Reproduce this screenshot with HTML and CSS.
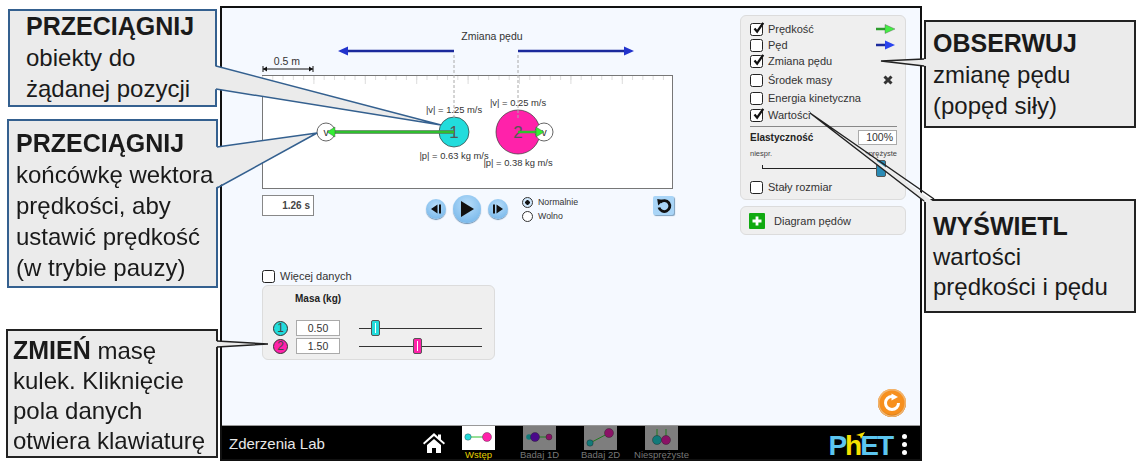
FILE: index.html
```html
<!DOCTYPE html>
<html lang="pl">
<head>
    <meta charset="UTF-8">
    <title>Zderzenia Lab</title>
    <link rel="stylesheet" href="styles.css">
</head>
<body>
<svg class="defs" width="0" height="0">
    <symbol id="tick" viewBox="0 0 16 16">
        <path d="M4 7.500l3 3.500 7-10" fill="none" stroke="#111" stroke-width="2.600"/>
    </symbol>
</svg>
<div class="stage">
    <div class="sim">
        <div class="sim-main">
            <div class="left-col">
                <svg class="scene" width="412" height="182" viewBox="262 8 412 182">
                    <text class="lbl" x="287" y="65" text-anchor="middle">0.5 m</text>
                    <path d="M263 69h50" stroke="#111" stroke-width="1"/>
                    <path d="M263 66v6M313 66v6" stroke="#111" stroke-width="1"/>
                    <path d="M263 69l4-2.500v5zM313 69l-4-2.500v5z" fill="#111"/>

                    <text class="lbl" x="492" y="40" text-anchor="middle">Zmiana pędu</text>
                    <path d="M346 51h108M518 51h108" stroke="#1b2a9c" stroke-width="2.500"/>
                    <path d="M338 51l10-4.500v9zM634 51l-10-4.500v9z" fill="#2233cc"/>

                    <rect x="262.500" y="75.500" width="410" height="113" fill="#fff" stroke="#777"/>
                    <path d="M262 78h411" stroke="#ddd" stroke-width="4" stroke-dasharray="1 9.280"/>
                    <path d="M262 80h411" stroke="#ddd" stroke-width="8" stroke-dasharray="1 50.400"/>

                    <circle cx="454" cy="132" r="15" fill="#22dcdc" stroke="#333" stroke-width=".7"/>
                    <circle cx="518" cy="132" r="22" fill="#ff22aa" stroke="#333" stroke-width=".7"/>
                    <circle cx="326" cy="132" r="9" fill="#fff" stroke="#666"/>
                    <circle cx="544" cy="132" r="9" fill="#fff" stroke="#666"/>
                    <text class="ball" x="454" y="138" text-anchor="middle">1</text>
                    <text class="ball" x="518" y="138" text-anchor="middle">2</text>
                    <text class="lbl" x="326" y="136" text-anchor="middle">v</text>
                    <text class="lbl" x="544" y="136" text-anchor="middle">v</text>
                    <path d="M334 132h120" stroke="#666" stroke-width="3.600"/>
                    <path d="M334 132h120M518 132h18" stroke="#2fbf2f" stroke-width="2.400"/>
                    <path d="M327 132l8-5v10zM544 132l-8-5v10z" fill="#33ee33" stroke="#444" stroke-width=".4"/>

                    <path d="M454 55v63M518 55v63" stroke="#aaa" stroke-dasharray="3 2"/>
                    <text class="val" x="454" y="113" text-anchor="middle">|v| = 1.25 m/s</text>
                    <text class="val" x="518" y="106" text-anchor="middle">|v| = 0.25 m/s</text>
                    <text class="val" x="454" y="159" text-anchor="middle">|p| = 0.63 kg m/s</text>
                    <text class="val" x="518" y="166" text-anchor="middle">|p| = 0.38 kg m/s</text>
                </svg>

                <div class="controls">
                    <div class="time-box">1.26 s</div>
                    <div class="transport">
                        <button class="round-btn">
                            <svg width="12" height="12" viewBox="0 0 12 12"><path d="M7.500 1.500v9L1 6zM9 1.500h2v9H9z" fill="#111"/></svg>
                        </button>
                        <button class="round-btn play">
                            <svg width="16" height="18" viewBox="0 0 16 18"><path d="M2 1l13 8-13 8z" fill="#111"/></svg>
                        </button>
                        <button class="round-btn">
                            <svg width="12" height="12" viewBox="0 0 12 12"><path d="M4.500 1.500v9L11 6zM1 1.500h2v9H1z" fill="#111"/></svg>
                        </button>
                    </div>
                    <div class="speed">
                        <div class="radio-row"><span class="radio on"></span>Normalnie</div>
                        <div class="radio-row"><span class="radio"></span>Wolno</div>
                    </div>
                    <button class="replay">
                        <svg width="16" height="16" viewBox="0 0 16 16">
                            <path d="M4.400 4.200a5.500 5.500 0 1 1-1.400 5.300" fill="none" stroke="#111" stroke-width="2.800"/>
                            <path d="M1.200 1l6.500 1-5.500 5.500z" fill="#111"/>
                        </svg>
                    </button>
                </div>

                <div class="more-data row">
                    <span class="check"></span>Więcej danych
                </div>
                <div class="mass-panel">
                    <div class="mass-title">Masa (kg)</div>
                    <div class="mass-row">
                        <span class="badge cyan">1</span>
                        <span class="num-box">0.50</span>
                        <span class="slider"><span class="thumb cyan" style="left: 16px"></span></span>
                    </div>
                    <div class="mass-row">
                        <span class="badge pink">2</span>
                        <span class="num-box">1.50</span>
                        <span class="slider"><span class="thumb pink" style="left: 58px"></span></span>
                    </div>
                </div>
            </div>

            <div class="right-col">
                <div class="panel">
                    <div class="row"><span class="check"><svg><use href="#tick"/></svg></span>Prędkość
                        <svg class="legend" width="19" height="10" viewBox="0 0 19 10"><path d="M0 5h10" stroke="#2c9c2c" stroke-width="2.500"/><path d="M19 5l-10-4.500v9z" fill="#44ee44" stroke="#555" stroke-width=".4"/></svg>
                    </div>
                    <div class="row"><span class="check"></span>Pęd
                        <svg class="legend" width="19" height="10" viewBox="0 0 19 10"><path d="M0 5h10" stroke="#1b2a9c" stroke-width="2.500"/><path d="M19 5l-10-4.500v9z" fill="#2a44ee"/></svg>
                    </div>
                    <div class="row"><span class="check"><svg><use href="#tick"/></svg></span>Zmiana pędu</div>
                    <div class="row r4"><span class="check"></span>Środek masy
                        <svg class="legend cross" width="10" height="10" viewBox="0 0 10 10"><path d="M1.500 1.500l7 7M8.500 1.500l-7 7" stroke="#333" stroke-width="3"/></svg>
                    </div>
                    <div class="row r5"><span class="check"></span>Energia kinetyczna</div>
                    <div class="row r6"><span class="check"><svg><use href="#tick"/></svg></span>Wartości</div>
                    <div class="divider"></div>
                    <div class="elastic-head">
                        <b>Elastyczność</b>
                        <span class="pct-box">100%</span>
                    </div>
                    <div class="elastic-ends"><span>niespr.</span><span>sprężyste</span></div>
                    <div class="elastic-slider"><span class="elastic-thumb"></span></div>
                    <div class="row r-last"><span class="check"></span>Stały rozmiar</div>
                </div>
                <div class="panel diagram">
                    <span class="plus">
                        <svg width="16" height="16" viewBox="0 0 16 16"><path d="M8 3.500v9M3.500 8h9" stroke="#fff" stroke-width="2.800"/></svg>
                    </span>
                    Diagram pędów
                </div>
                <button class="reset-all">
                    <svg width="20" height="20" viewBox="0 0 20 20">
                        <path d="M10 3.500a6.500 6.500 0 1 0 6.500 6.500" fill="none" stroke="#fff" stroke-width="3"/>
                        <path d="M9.500 .5l6.500 3.500-6.500 3.500z" fill="#fff"/>
                    </svg>
                </button>
            </div>
        </div>

        <div class="navbar">
            <div class="sim-title">Zderzenia Lab</div>
            <svg class="home" width="22" height="20" viewBox="0 0 22 20">
                <path d="M11 0L0 10l1.200 1.500L11 3l9.800 8.500L22 10l-4-3.600V1.500h-3v2.200z" fill="#fff"/>
                <path d="M4 12l7-6 7 6v8h-5v-5H9v5H4z" fill="#fff"/>
            </svg>
            <div class="tab active">
                <svg class="thumb-img" viewBox="0 0 33 24">
                    <path d="M6 11h18" stroke="#2fbf2f" stroke-width="1"/>
                    <circle cx="6" cy="11" r="3.200" fill="#22dcdc" stroke="#333" stroke-width=".4"/>
                    <circle cx="25" cy="11" r="4.500" fill="#ff22aa" stroke="#333" stroke-width=".4"/>
                </svg>
                <span>Wstęp</span>
            </div>
            <div class="tab">
                <svg class="thumb-img" viewBox="0 0 33 24">
                    <path d="M7 11h20" stroke="#1e7a1e" stroke-width="1"/>
                    <circle cx="6" cy="11" r="2.800" fill="#127a7a"/>
                    <circle cx="12" cy="11" r="4.500" fill="#4a0a8a" stroke="#222" stroke-width=".4"/>
                    <circle cx="26" cy="11" r="3" fill="#8a1266" stroke="#222" stroke-width=".4"/>
                </svg>
                <span>Badaj 1D</span>
            </div>
            <div class="tab">
                <svg class="thumb-img" viewBox="0 0 33 24">
                    <path d="M6 17l19-10" stroke="#1e7a1e" stroke-width="1"/>
                    <circle cx="6" cy="17" r="3.200" fill="#127a7a" stroke="#222" stroke-width=".4"/>
                    <circle cx="25" cy="7" r="4.500" fill="#8a1266" stroke="#222" stroke-width=".4"/>
                </svg>
                <span>Badaj 2D</span>
            </div>
            <div class="tab">
                <svg class="thumb-img" viewBox="0 0 33 24">
                    <path d="M12 12V3M21 12V3" stroke="#1e7a1e" stroke-width="1"/>
                    <circle cx="12" cy="14" r="4.500" fill="#127a7a" stroke="#222" stroke-width=".4"/>
                    <circle cx="21" cy="14" r="4.500" fill="#8a1266" stroke="#222" stroke-width=".4"/>
                </svg>
                <span>Niesprężyste</span>
            </div>
            <div class="phet">
                <svg class="phet-star" width="9" height="7" viewBox="0 0 9 7"><path d="M9 0L0 3l4 1 1 3z" fill="#f5e000"/></svg>
                <span class="blue">P</span><span class="yellow">h</span><span class="blue">ET</span>
            </div>
            <div class="dots"><i></i><i></i><i></i></div>
        </div>
    </div>

    <div class="callout blue-edge c1"><b>PRZECIĄGNIJ</b><br>obiekty do<br>żądanej pozycji</div>
    <div class="callout blue-edge c2"><b>PRZECIĄGNIJ</b><br>końcówkę wektora<br>prędkości, aby<br>ustawić prędkość<br>(w trybie pauzy)</div>
    <div class="callout c3"><b>ZMIEŃ</b> masę<br>kulek. Kliknięcie<br>pola danych<br>otwiera klawiaturę</div>
    <div class="callout c4"><b>OBSERWUJ</b><br>zmianę pędu<br>(popęd siły)</div>
    <div class="callout c5"><b>WYŚWIETL</b><br>wartości<br>prędkości i pędu</div>

    <svg class="tails" width="1140" height="464" viewBox="0 0 1140 464">
        <path class="tail-fill" d="M214 66L441 125 214 89z"/>
        <path class="tail-blue" d="M216 66L441 125 216 89"/>
        <path class="tail-fill" d="M215 147L317 133 215 188z"/>
        <path class="tail-blue" d="M217 147L317 133 217 188"/>
        <path class="tail-fill" d="M215 341L268 344 215 347z"/>
        <path class="tail-dark" d="M217 341L268 344 217 347"/>
        <path class="tail-fill" d="M926 59L881 61 926 66z"/>
        <path class="tail-dark" d="M924 59L881 61 924 66"/>
        <path class="tail-fill" d="M934 202L810 113 925 202z"/>
        <path class="tail-dark" d="M934 199L810 113 924 201"/>
    </svg>
</div>
</body>
</html>
```
FILE: styles.css
```css
* {
    box-sizing: border-box;
}
body {
    margin: 0;
    background: #fff;
    font-family: "Liberation Sans", Arial, sans-serif;
    color: #222;
}
button {
    padding: 0;
    border: none;
    font: inherit;
}
.defs {
    position: absolute;
}
.stage {
    position: relative;
    width: 1140px;
    height: 464px;
    padding: 6px 0 0 220px;
    overflow: hidden;
    filter: blur(.35px);
}

/* sim window */
.sim {
    display: flex;
    flex-direction: column;
    width: 702px;
    height: 455px;
    border: 2px solid #111;
    background: #f5f9ff;
}
.sim-main {
    display: flex;
    flex: 1;
    min-height: 0;
}
.left-col {
    width: 412px;
    margin-left: 40px;
}
.scene {
    display: block;
    overflow: visible;
}
.lbl {
    font-size: 10.500px;
    fill: #333;
}
.val {
    font-size: 9.400px;
    fill: #333;
}
.ball {
    font-size: 17px;
    fill: #555;
}

.controls {
    display: flex;
    align-items: flex-start;
    margin-top: 5px;
    height: 32px;
}
.time-box {
    width: 52px;
    height: 21px;
    padding-right: 3px;
    border: 1px solid #888;
    background: #fff;
    font-size: 10px;
    font-weight: bold;
    line-height: 19px;
    text-align: right;
    color: #444;
}
.transport {
    display: flex;
    align-items: center;
    gap: 7px;
    height: 28px;
    margin-left: 112px;
}
.round-btn {
    display: flex;
    align-items: center;
    justify-content: center;
    width: 20px;
    height: 20px;
    border-radius: 50%;
    background: radial-gradient(circle at 50% 35%, #b9defa, #7fbcec 75%, #5a9ad0);
    box-shadow: 0 1px 1px #6a8fb0;
}
.round-btn.play {
    width: 28px;
    height: 28px;
}
.speed {
    margin: 0 0 0 14px;
    font-size: 8.800px;
    color: #333;
}
.radio-row {
    display: flex;
    align-items: center;
    gap: 5px;
    height: 14px;
}
.radio {
    width: 11px;
    height: 11px;
    border: 1px solid #333;
    border-radius: 50%;
    background: #fff;
}
.radio.on {
    background: radial-gradient(circle, #111 2px, #cfe6fa 2.500px);
}
.replay {
    display: flex;
    align-items: center;
    justify-content: center;
    width: 21px;
    height: 19px;
    margin: 1px 0 0 auto;
    border-radius: 2px;
    background: #a9d5f7;
    box-shadow: 1px 1px 1px #7d9fbd;
}

.row {
    display: flex;
    align-items: center;
    gap: 5px;
    height: 16px;
    font-size: 11px;
    color: #333;
}
.check {
    flex: none;
    width: 13px;
    height: 13px;
    border: 1px solid #222;
    border-radius: 2.500px;
    background: #fff;
}
.check svg {
    display: block;
    width: 14px;
    height: 14px;
    margin: -2px 0 0 0;
}
.more-data {
    margin-top: 41px;
    margin-bottom: 1px;
}
.mass-panel {
    height: 75px;
    width: 233px;
    padding: 6px 0 0 10px;
    border: 1px solid #dcdcdc;
    border-radius: 6px;
    background: #efefef;
}
.mass-title {
    height: 13px;
    margin-left: 22px;
    margin-bottom: 14px;
    font-size: 10px;
    font-weight: bold;
    line-height: 13px;
    color: #222;
}
.mass-row {
    display: flex;
    align-items: center;
    height: 18px;
}
.badge {
    width: 15px;
    height: 15px;
    border: 1px solid #333;
    border-radius: 50%;
    font-size: 12px;
    line-height: 13px;
    text-align: center;
    color: #444;
}
.cyan {
    background: #22dcdc;
}
.pink {
    background: #ff22aa;
}
.num-box {
    width: 44px;
    height: 16px;
    margin-left: 8px;
    border: 1px solid #aaa;
    background: #fff;
    font-size: 10.500px;
    line-height: 14px;
    text-align: center;
    color: #333;
}
.slider {
    position: relative;
    width: 123px;
    height: 1px;
    margin-left: 19px;
    background: #333;
}
.thumb {
    position: absolute;
    top: -8px;
    width: 9px;
    height: 16px;
    margin-left: -4px;
    border: 1px solid #555;
    border-radius: 2px;
}
.thumb::after {
    content: "";
    display: block;
    width: 1px;
    height: 10px;
    margin: 2px auto;
    background: #fff;
}

/* right column */
.right-col {
    display: flex;
    flex-direction: column;
    width: 166px;
    margin: 7px 0 0 66px;
}
.panel {
    padding: 5px 8px 4px 9px;
    border: 1px solid #dcdcdc;
    border-radius: 6px;
    background: #efefef;
}
.legend {
    margin-left: auto;
    margin-right: 2px;
}
.cross {
    margin-right: 4px;
}
.r4 {
    margin-top: 3px;
}
.r5 {
    margin-top: 2px;
}
.r6 {
    margin-top: 1px;
}
.divider {
    height: 1px;
    margin-top: 3px;
    background: #888;
}
.elastic-head {
    display: flex;
    align-items: center;
    justify-content: space-between;
    margin-top: 3px;
    font-size: 10px;
}
.pct-box {
    width: 39px;
    height: 15px;
    padding-right: 3px;
    border: 1px solid #aaa;
    background: #fff;
    font-size: 10.500px;
    line-height: 13px;
    text-align: right;
    color: #333;
}
.elastic-ends {
    display: flex;
    justify-content: space-between;
    height: 12px;
    margin-top: 3px;
    font-size: 7.500px;
    line-height: 12px;
    color: #444;
}
.elastic-slider {
    position: relative;
    height: 1px;
    margin: 8px 12px 0 12px;
    background: #222;
}
.elastic-slider::before {
    content: "";
    position: absolute;
    left: 0;
    top: -3px;
    width: 1px;
    height: 3px;
    background: #222;
}
.elastic-thumb {
    position: absolute;
    top: -8px;
    right: -1px;
    width: 10px;
    height: 17px;
    border: 1px solid #555;
    border-radius: 2px;
    background: #2a8bb5;
}
.r-last {
    margin-top: 10px;
}
.diagram {
    display: flex;
    align-items: center;
    gap: 9px;
    height: 29px;
    margin-top: 6px;
    padding: 0 0 0 8px;
    font-size: 11px;
    color: #333;
}
.plus {
    width: 16px;
    height: 16px;
    background: #11aa11;
    border-radius: 1px;
}
.plus svg {
    display: block;
}
.reset-all {
    display: flex;
    align-items: center;
    justify-content: center;
    align-self: flex-end;
    width: 28px;
    height: 28px;
    margin: auto 0 8px 0;
    border-radius: 50%;
    background: #f7901e;
    box-shadow: inset 0 0 0 1.500px #f2b56f, inset 0 -2px 1px #b96a10;
}

/* nav bar */
.navbar {
    display: flex;
    align-items: flex-start;
    flex: none;
    height: 34px;
    border-top: 1px solid #999;
    background: #000;
}
.sim-title {
    width: 201px;
    padding: 9px 0 0 7px;
    font-size: 15px;
    color: #e8e8e8;
}
.home {
    margin-top: 7px;
    margin-right: 3px;
}
.tab {
    display: flex;
    flex-direction: column;
    align-items: center;
    width: 61px;
    padding-top: 0;
    font-size: 9.500px;
    color: #777;
}
.tab span {
    line-height: 9px;
    white-space: nowrap;
}
.thumb-img {
    display: block;
    width: 33px;
    height: 24px;
    background: #7e7e7e;
}
.tab.active {
    color: #e6d000;
}
.tab.active .thumb-img {
    background: #fff;
}
.phet {
    position: relative;
    margin: 6px 0 0 auto;
    font-size: 28px;
    font-weight: bold;
    line-height: 28px;
    letter-spacing: -2px;
}
.phet-star {
    position: absolute;
    left: 28px;
    top: 0;
}
.blue {
    color: #5cc6f0;
}
.yellow {
    color: #f5e000;
}
.dots {
    display: flex;
    flex-direction: column;
    gap: 3px;
    margin: 8px 13px 0 10px;
}
.dots i {
    width: 5px;
    height: 5px;
    border-radius: 50%;
    background: #fff;
}

/* callouts, they sit on top of the sim */
.callout {
    position: absolute;
    border: 2px solid #222;
    background: #ebebeb;
    font-size: 24px;
    line-height: 31px;
    white-space: nowrap;
    color: #1a1a1a;
}
.callout b {
    font-size: 25px;
}
.blue-edge {
    border-color: #34608f;
}
.c1 {
    left: 8px;
    top: 9px;
    width: 209px;
    height: 98px;
    padding: 0 0 0 16px;
}
.c2 {
    left: 7px;
    top: 119px;
    width: 211px;
    height: 169px;
    padding: 7px 0 0 7px;
}
.c3 {
    left: 6px;
    top: 329px;
    width: 212px;
    height: 129px;
    padding: 4px 0 0 5px;
    line-height: 30px;
}
.c4 {
    left: 924px;
    top: 20px;
    width: 212px;
    height: 108px;
    padding: 6px 0 0 7px;
}
.c5 {
    left: 924px;
    top: 199px;
    width: 212px;
    height: 114px;
    padding: 10px 0 0 7px;
    line-height: 30px;
}
.tails {
    position: absolute;
    left: 0;
    top: 0;
    pointer-events: none;
}
.tail-fill {
    fill: #ebebeb;
}
.tail-blue,
.tail-dark {
    fill: none;
    stroke-width: 1.500;
}
.tail-blue {
    stroke: #34608f;
}
.tail-dark {
    stroke: #222;
}
```
